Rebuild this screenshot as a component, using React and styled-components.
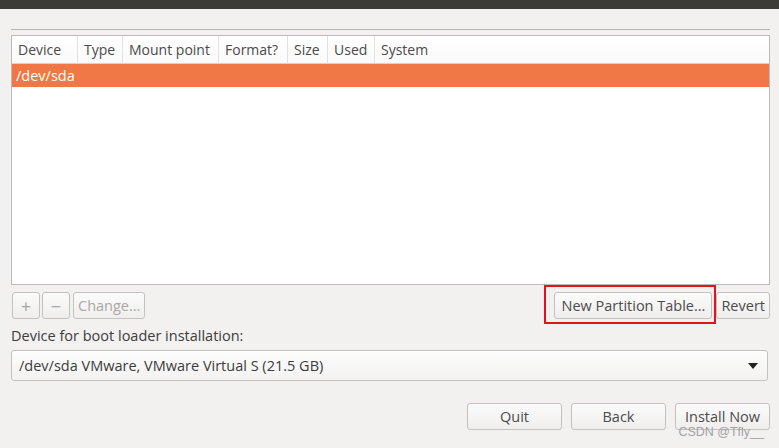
import React from 'react'
import styled, { createGlobalStyle } from 'styled-components'

const Global = createGlobalStyle`
body{
  margin:0;
  background:#f2f1f0;
  font-family:"Open Sans","DejaVu Sans",sans-serif;
  font-size:14.5px;
  color:#3c3c3c;
}
`

const Page = styled.div`
width:779px;
height:448px;
position:relative;
overflow:hidden;
background:#f2f1f0;
`

const TitleBar = styled.div`
height:9px;
background:#3c3b37;
`

const Main = styled.div`
padding:20px 9px 0 11px;
display:flex;
flex-direction:column;
`

const Separator = styled.div`
height:1px;
background:#b8b6b3;
`

const Table = styled.div`
margin-top:5px;
height:248px;
border:1px solid #bdbbb8;
background:#fff;
display:flex;
flex-direction:column;
`

const HeaderRow = styled.div`
display:flex;
height:27px;
border-bottom:1px solid #d4d3d1;
background:linear-gradient(#ffffff,#fafafa);
`

const HeaderCell = styled.div`
width:${p => p.w}px;
flex:${p => (p.w ? 'none' : '1')};
padding-left:6px;
box-sizing:border-box;
border-right:${p => (p.w ? '1px solid #e2e1df' : 'none')};
display:flex;
align-items:center;
color:#4a4a4a;
font-size:14px;
`

const SelectedRow = styled.div`
height:23px;
background:#f07846;
color:#fff;
display:flex;
align-items:center;
padding-left:4px;
`

const ToolRow = styled.div`
margin-top:7px;
display:flex;
align-items:center;
height:27px;
`

const Button = styled.button`
height:27px;
min-width:${p => p.min || 0}px;
padding:0 ${p => p.pad ?? 6}px;
border:1px solid #c4c2bf;
border-radius:3px;
background:linear-gradient(#fbfbfb,#efeeed);
font-family:inherit;
font-size:14.5px;
color:${p => (p.disabled ? '#a9a8a6' : '#4c4c4c')};
cursor:default;
display:flex;
align-items:center;
justify-content:center;
box-sizing:border-box;
`

const IconButton = styled(Button)`
width:28px;
padding:0;
font-size:18px;
`

const Spacer = styled.div`
flex:1;
`

const Highlight = styled.div`
position:relative;
margin-right:4px;
&::after{
  content:'';
  position:absolute;
  left:-10px;
  right:-4px;
  top:-7px;
  bottom:-5px;
  border:2px solid #e3131d;
  pointer-events:none;
}
`

const Label = styled.div`
margin-top:5px;
height:22px;
display:flex;
align-items:center;
`

const Combo = styled.div`
margin-top:4px;
height:31px;
width:757px;
box-sizing:border-box;
border:1px solid #c4c2bf;
border-radius:3px;
background:linear-gradient(#fdfdfd,#f3f2f1);
display:flex;
align-items:center;
padding:0 9px 0 7px;
color:#3c3c3c;
`

const Arrow = styled.div`
margin-left:auto;
width:0;
height:0;
border-left:5px solid transparent;
border-right:5px solid transparent;
border-top:6px solid #222;
`

const Footer = styled.div`
margin-top:22px;
display:flex;
justify-content:flex-end;
gap:9px;
`

const Watermark = styled.div`
position:absolute;
right:15px;
bottom:9px;
font-family:"Liberation Sans",sans-serif;
font-size:12.5px;
color:#a3a3a3;
`

const columns = [
  ['Device', 66],
  ['Type', 45],
  ['Mount point', 96],
  ['Format?', 69],
  ['Size', 40],
  ['Used', 47],
  ['System', 0],
]

const App = () => {
  return (
    <Page>
      <Global />
      <TitleBar />
      <Main>
        <Separator />
        <Table>
          <HeaderRow>
            {columns.map(([name, w]) => (
              <HeaderCell key={name} w={w}>{name}</HeaderCell>
            ))}
          </HeaderRow>
          <SelectedRow>/dev/sda</SelectedRow>
        </Table>
        <ToolRow>
          <IconButton disabled style={{ marginLeft: 1 }}>+</IconButton>
          <IconButton disabled style={{ marginLeft: 2 }}>−</IconButton>
          <Button disabled style={{ marginLeft: 3 }} pad={4}>Change...</Button>
          <Spacer />
          <Highlight>
            <Button pad={6}>New Partition Table...</Button>
          </Highlight>
          <Button pad={4}>Revert</Button>
        </ToolRow>
        <Label>Device for boot loader installation:</Label>
        <Combo>
          /dev/sda VMware, VMware Virtual S (21.5 GB)
          <Arrow />
        </Combo>
        <Footer>
          <Button min={95}>Quit</Button>
          <Button min={95}>Back</Button>
          <Button min={95}>Install Now</Button>
        </Footer>
      </Main>
      <Watermark>CSDN @Tfly__</Watermark>
    </Page>
  )
}

export default App
